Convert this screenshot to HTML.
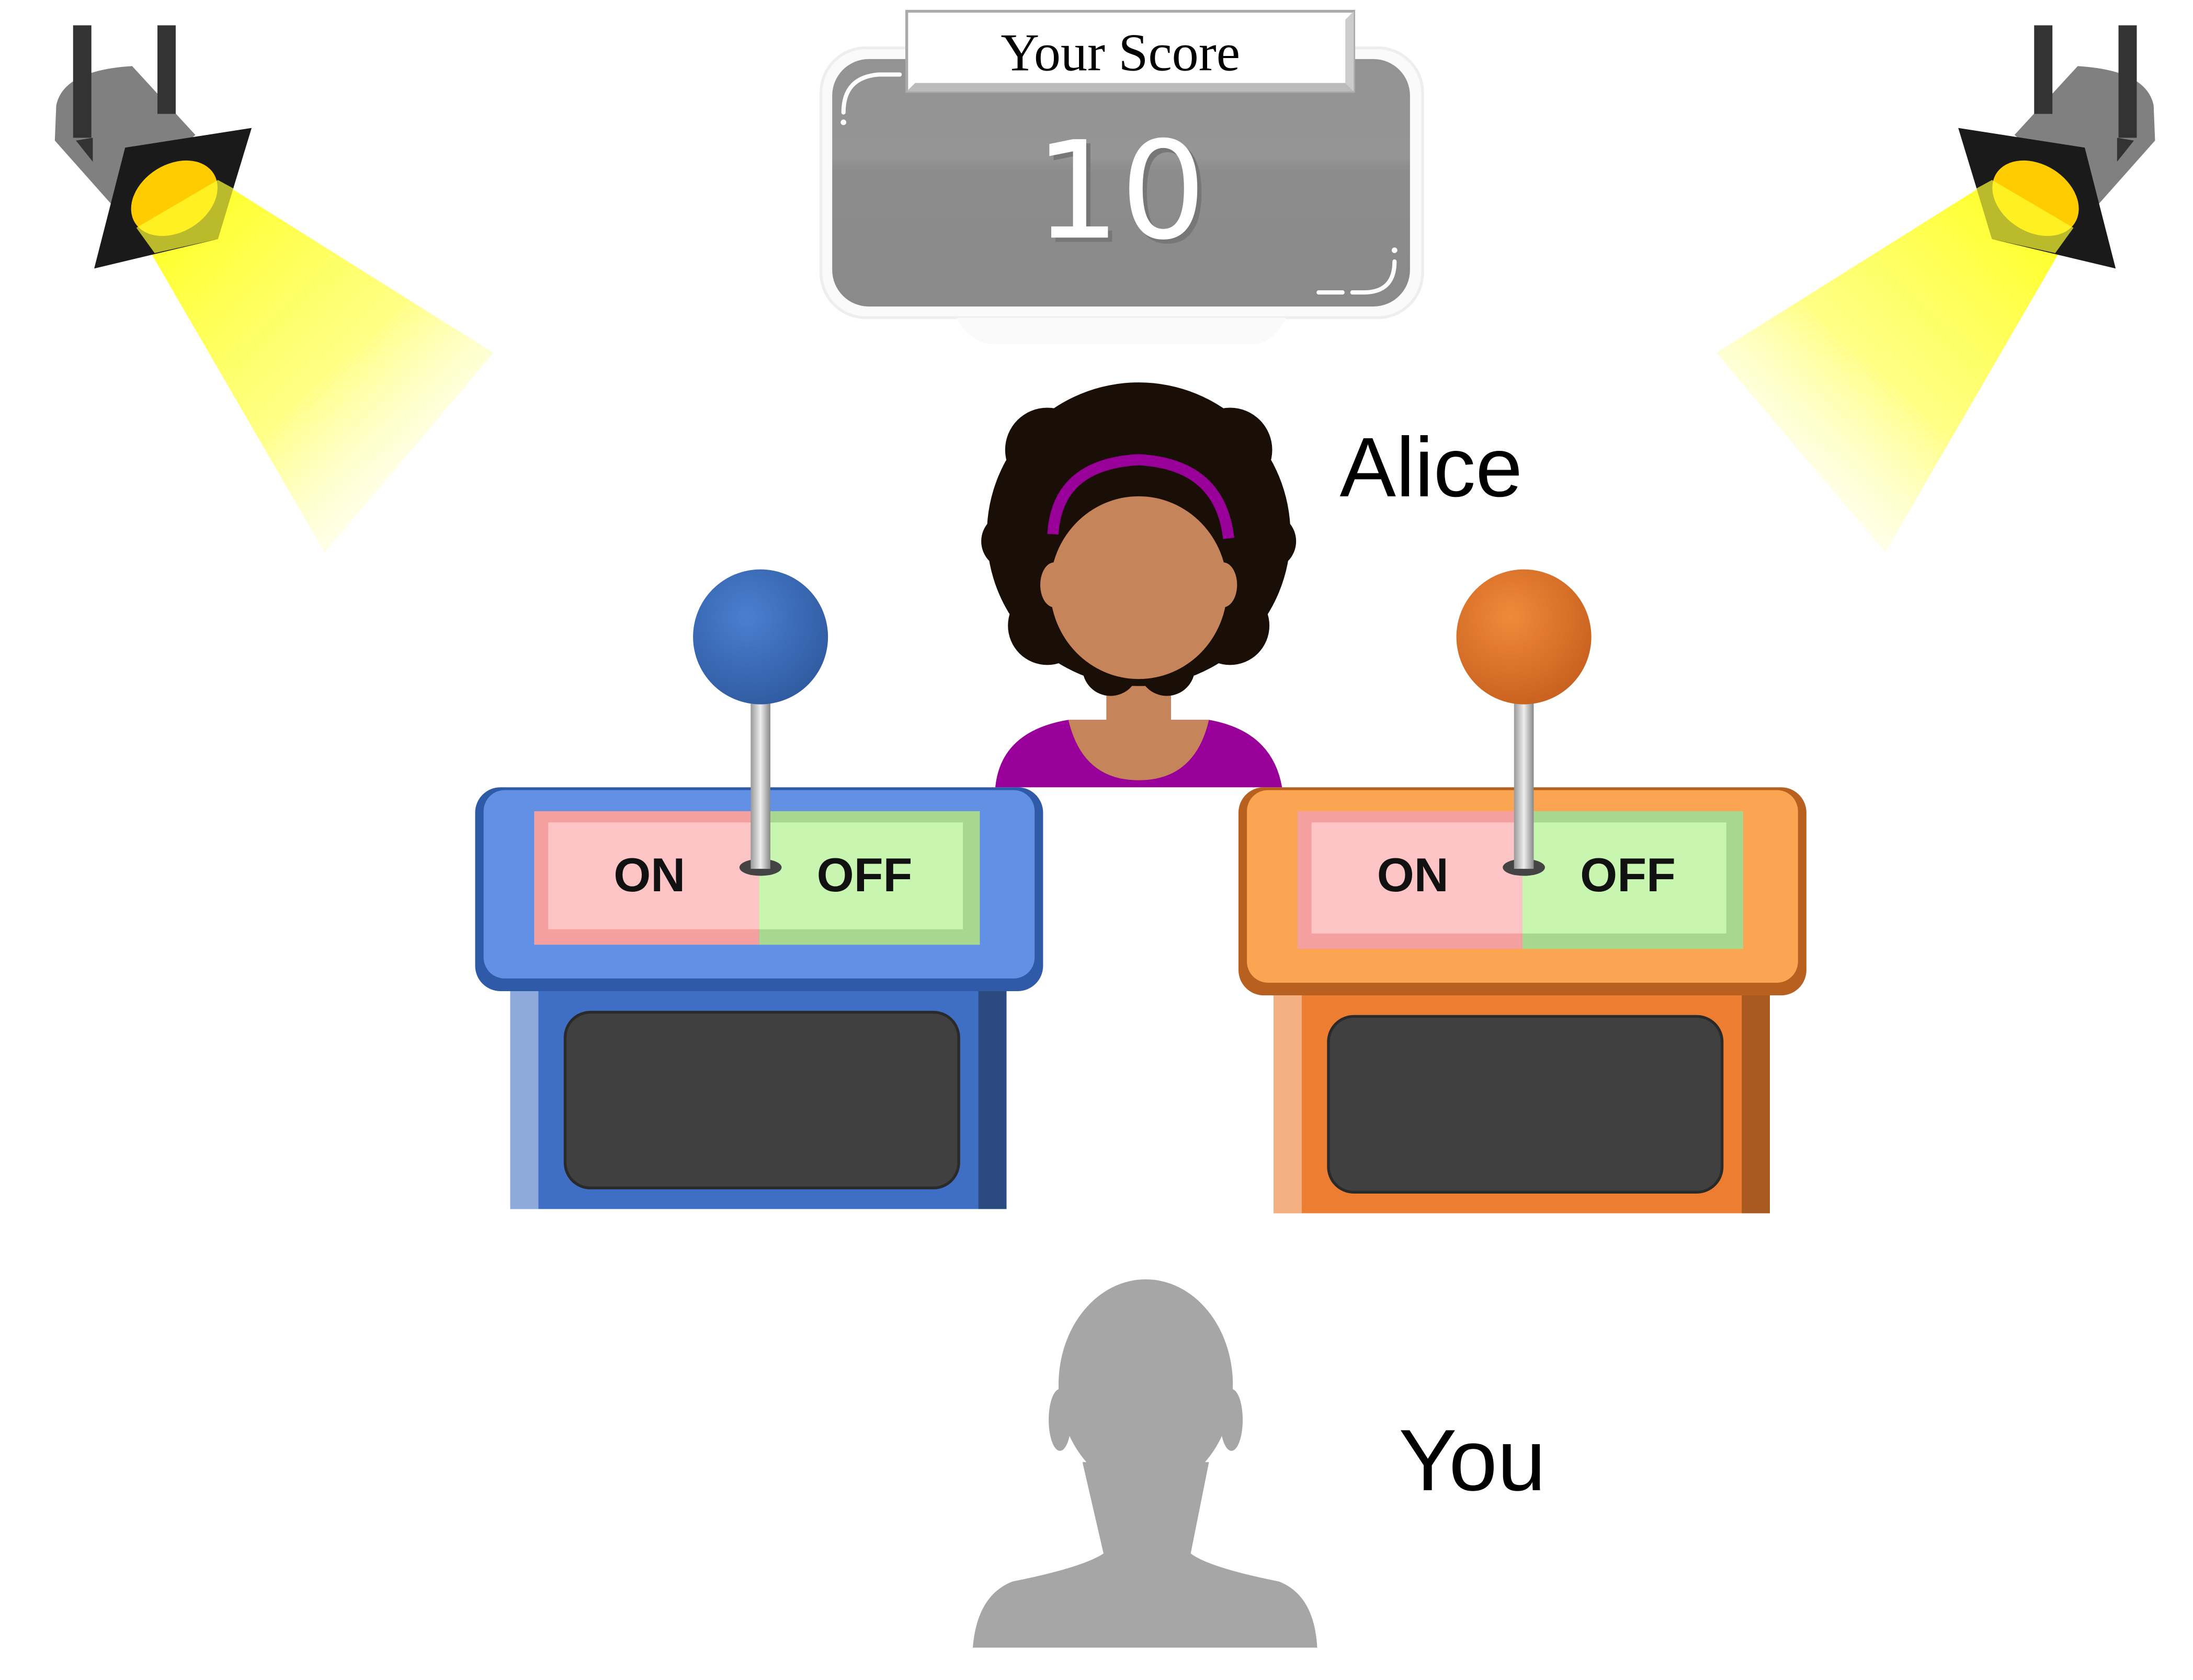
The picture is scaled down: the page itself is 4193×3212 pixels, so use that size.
<!DOCTYPE html>
<html><head><meta charset="utf-8"><style>
html,body{margin:0;padding:0;background:#fff;width:4193px;height:3212px;overflow:hidden}
svg{display:block}
</style></head><body>
<svg width="4193" height="3212" viewBox="0 0 1560 1195" xmlns="http://www.w3.org/2000/svg">
<defs>
<linearGradient id="beamL" x1="0.2" y1="0.1" x2="0.9" y2="0.9"><stop offset="0" stop-color="#ffff33"/><stop offset="0.5" stop-color="#ffff66" stop-opacity="0.8"/><stop offset="1" stop-color="#ffffcc" stop-opacity="0"/></linearGradient>
<linearGradient id="gbox" x1="0" y1="0" x2="0" y2="1"><stop offset="0" stop-color="#939393"/><stop offset="0.4" stop-color="#959595"/><stop offset="0.45" stop-color="#8c8c8c"/><stop offset="1" stop-color="#8a8a8a"/></linearGradient>
<radialGradient id="ballB" cx="0.4" cy="0.35" r="0.7"><stop offset="0" stop-color="#4a7fd0"/><stop offset="1" stop-color="#2f5aa0"/></radialGradient>
<radialGradient id="ballO" cx="0.4" cy="0.35" r="0.7"><stop offset="0" stop-color="#f08a3a"/><stop offset="1" stop-color="#c8601e"/></radialGradient>
<linearGradient id="stick" x1="0" x2="1"><stop offset="0" stop-color="#999"/><stop offset="0.5" stop-color="#eee"/><stop offset="1" stop-color="#888"/></linearGradient>
<g id="spot">
<path d="M97,162 L155,128 L351,251 L231,393 Z" fill="url(#beamL)"/>
<path d="M39,100 L40,75 Q45,50 94,47 L139,96 L79,145 Z" fill="#808080"/>
<rect x="52" y="18" width="13" height="80" fill="#333"/>
<path d="M54,100 L66,115 L66,98 Z" fill="#333"/>
<rect x="112" y="18" width="13" height="63" fill="#333"/>
<path d="M89,105 L179,91 L155,170 L67,191 Z" fill="#1a1a1a"/>
<ellipse cx="124" cy="141" rx="33" ry="24" transform="rotate(-32 124 141)" fill="#ffcc00"/>
<path d="M155,128 L166,134 L155,170 L110,180 L97,162 Z" fill="#ffff33" opacity="0.7"/>
</g>
<g id="podium">
<rect x="363" y="700" width="353" height="160" fill="#3f6fc4"/>
<rect x="363" y="700" width="20" height="160" fill="#8eaadc"/>
<rect x="696" y="700" width="20" height="160" fill="#2a4a80"/>
<rect x="402" y="720" width="280" height="125" rx="18" fill="#404040" stroke="#2a2a2a" stroke-width="2"/>
<rect x="338" y="560" width="404" height="145" rx="18" fill="#2f5aa8"/>
<rect x="344" y="562" width="392" height="134" rx="15" fill="#6190e4"/>
<rect x="380" y="577" width="160" height="95" fill="#f4a0a0"/>
<rect x="540" y="577" width="157" height="95" fill="#a8d890"/>
<rect x="390" y="585" width="150" height="76" fill="#fcc4c4"/>
<rect x="540" y="585" width="145" height="76" fill="#c8f5b0"/>
<text x="462" y="634" font-family="Liberation Sans, sans-serif" font-weight="bold" font-size="34" text-anchor="middle" fill="#111">ON</text>
<text x="615" y="634" font-family="Liberation Sans, sans-serif" font-weight="bold" font-size="34" text-anchor="middle" fill="#111">OFF</text>
<ellipse cx="541" cy="617" rx="15" ry="6" fill="#444"/>
<rect x="534" y="495" width="14" height="123" fill="url(#stick)"/>
<circle cx="541" cy="453" r="48" fill="url(#ballB)"/>
</g>
</defs>

<use href="#spot"/>
<use href="#spot" transform="translate(1572 0) scale(-1 1)"/>

<rect x="584" y="34" width="428" height="192" rx="32" fill="#fafafa" stroke="#eee" stroke-width="2"/>
<path d="M680,226 Q690,245 710,245 L890,245 Q905,245 915,226 Z" fill="#fafafa"/>
<rect x="592" y="42" width="411" height="176" rx="26" fill="url(#gbox)"/>
<path d="M600,80 Q600,55 625,53 L640,53" stroke="#fff" stroke-width="3" fill="none" stroke-linecap="round"/>
<circle cx="600" cy="87" r="2" fill="#fff"/>
<path d="M992,186 Q992,208 970,208 L962,208 M955,208 L938,208" stroke="#fff" stroke-width="3" fill="none" stroke-linecap="round"/>
<circle cx="992" cy="178" r="2" fill="#fff"/>
<rect x="645" y="8" width="318" height="57" fill="#fff" stroke="#aaa" stroke-width="2"/>
<path d="M645,65 L651,59 L957,59 L963,65 Z" fill="#bbb"/>
<path d="M963,8 L957,14 L957,59 L963,65 Z" fill="#ccc"/>
<text x="797" y="50" font-family="Liberation Serif, serif" font-size="38" text-anchor="middle" fill="#000">Your Score</text>
<text x="800" y="172" font-family="DejaVu Sans, sans-serif" font-size="96" text-anchor="middle" fill="#777">10</text>
<text x="797" y="169" font-family="DejaVu Sans, sans-serif" font-size="96" text-anchor="middle" fill="#fff">10</text>

<path d="M708,560 Q712,520 760,512 L860,512 Q905,520 912,560 Z" fill="#990099"/>
<rect x="787" y="470" width="46" height="55" fill="#c6845a"/>
<path d="M760,512 Q770,555 810,555 Q850,555 860,512 Z" fill="#c6845a"/>
<g fill="#1a0f07">
<circle cx="810" cy="380" r="108"/>
<circle cx="745" cy="320" r="30"/><circle cx="875" cy="320" r="30"/>
<circle cx="718" cy="385" r="20"/><circle cx="902" cy="385" r="20"/>
<circle cx="745" cy="445" r="28"/><circle cx="875" cy="445" r="28"/>
<circle cx="790" cy="475" r="20"/><circle cx="830" cy="475" r="20"/>
</g>
<ellipse cx="810" cy="418" rx="63" ry="65" fill="#c6845a"/>
<ellipse cx="750" cy="416" rx="10" ry="16" fill="#c6845a"/>
<ellipse cx="870" cy="416" rx="10" ry="16" fill="#c6845a"/>
<path d="M749,380 Q752,330 810,327 Q868,330 874,383" stroke="#990099" stroke-width="8" fill="none"/>
<text x="953" y="353" font-family="Liberation Sans, sans-serif" font-size="60" fill="#000">Alice</text>

<use href="#podium"/>
<g transform="translate(543 3)">
<rect x="363" y="700" width="353" height="160" fill="#ed7d31"/>
<rect x="363" y="700" width="20" height="160" fill="#f4b083"/>
<rect x="696" y="700" width="20" height="160" fill="#a85a20"/>
<rect x="402" y="720" width="280" height="125" rx="18" fill="#404040" stroke="#2a2a2a" stroke-width="2"/>
<rect x="338" y="557" width="404" height="148" rx="18" fill="#b86020"/>
<rect x="344" y="559" width="392" height="137" rx="15" fill="#fba552"/>
<rect x="380" y="574" width="160" height="98" fill="#f4a0a0"/>
<rect x="540" y="574" width="157" height="98" fill="#a8d890"/>
<rect x="390" y="582" width="150" height="79" fill="#fcc4c4"/>
<rect x="540" y="582" width="145" height="79" fill="#c8f5b0"/>
<text x="462" y="631" font-family="Liberation Sans, sans-serif" font-weight="bold" font-size="34" text-anchor="middle" fill="#111">ON</text>
<text x="615" y="631" font-family="Liberation Sans, sans-serif" font-weight="bold" font-size="34" text-anchor="middle" fill="#111">OFF</text>
<ellipse cx="541" cy="614" rx="15" ry="6" fill="#444"/>
<rect x="534" y="495" width="14" height="120" fill="url(#stick)"/>
<circle cx="541" cy="450" r="48" fill="url(#ballO)"/>
</g>

<g fill="#a6a6a6">
<ellipse cx="815" cy="985" rx="62" ry="75"/>
<ellipse cx="754" cy="1010" rx="8" ry="22"/><ellipse cx="876" cy="1010" rx="8" ry="22"/>
<path d="M770,1040 L785,1105 Q770,1115 720,1125 Q695,1135 692,1172 L937,1172 Q935,1135 910,1125 Q860,1115 847,1105 L860,1040 Z"/>
</g>
<text x="995" y="1060" font-family="Liberation Sans, sans-serif" font-size="62" fill="#000">You</text>
</svg>
</body></html>
